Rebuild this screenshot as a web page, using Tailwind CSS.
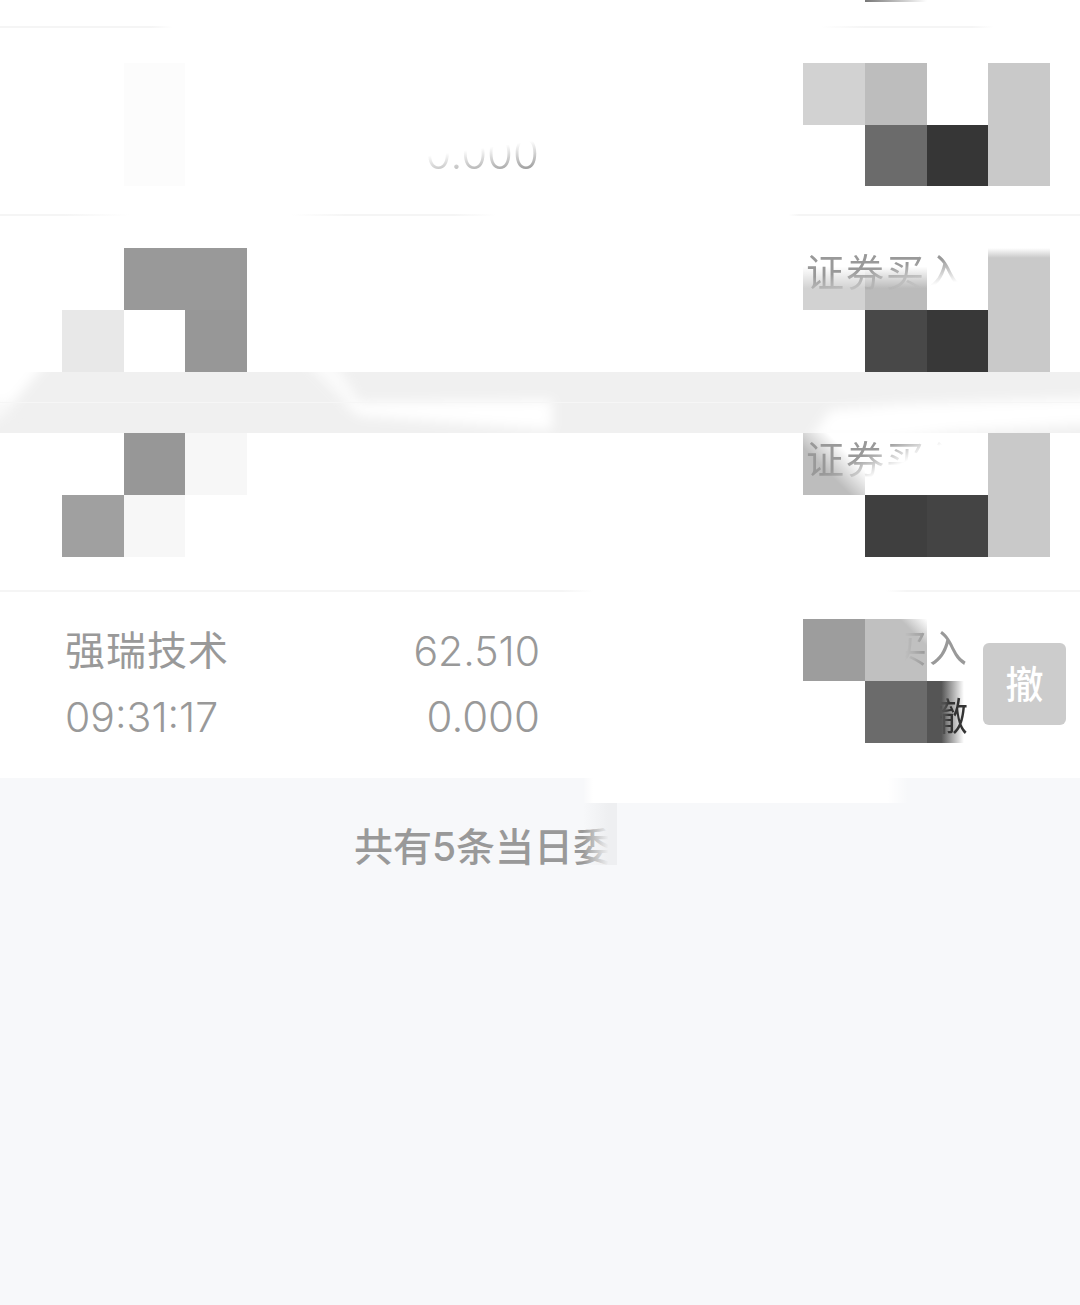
<!DOCTYPE html>
<html lang="zh">

<head>
    <meta charset="UTF-8">
    <meta name="viewport" content="width=device-width, initial-scale=1.0">
    <script src="https://cdn.jsdelivr.net/npm/@tailwindcss/browser@4"></script>
    <title>当日委托</title>
</head>

<body>
    <div class="relative h-[1305px] w-[1080px] overflow-hidden bg-[#f7f8fa] font-['Inter','Noto_Sans_CJK_SC',sans-serif]">

        <!-- List -->
        <div class="bg-white">
            <!-- Cut off row at top -->
            <div class="h-[26px] pl-[865px]">
                <div class="h-[2px] w-[62px] bg-[linear-gradient(to_right,#777,#fff)]"></div>
            </div>
            <div class="h-[2px] bg-[linear-gradient(to_right,#f5f5f5,#f5f5f5_14%,#fff_16%,#fff_76%,#f5f5f5_80%,#f5f5f5_90%,#fff_92%)]"></div>

            <!-- Row 1 -->
            <div class="relative flex h-[186px] justify-between pl-[62px] pr-[30px] pt-[35px]">
                <div class="grid h-[123px] w-[185px] grid-cols-3 grid-rows-2">
                    <div></div><div class="bg-[#fcfcfc]"></div><div></div>
                    <div></div><div class="bg-[#fcfcfc]"></div><div></div>
                </div>
                <div class="grid h-[123px] w-[247px] grid-cols-4 grid-rows-2">
                    <div class="bg-[#d2d2d2]"></div><div class="bg-[#bdbdbd]"></div><div></div><div class="bg-[#c9c9c9]"></div>
                    <div></div><div class="bg-[#6b6b6b]"></div><div class="bg-[#363636]"></div><div class="bg-[#c9c9c9]"></div>
                </div>
                <div class="absolute right-[541px] top-[96px] text-[42px] leading-[60px] font-[350] text-[#999] [mask-image:linear-gradient(172deg,transparent_42%,black_80%)]">0.000</div>
            </div>
            <div class="h-[2px] bg-[linear-gradient(to_right,#f5f5f5,#f5f5f5_6%,#fff_12%,#fff_27%,#f5f5f5_32%,#f5f5f5_42%,#fff_46%,#fff_73%,#f5f5f5_74%)]"></div>

            <!-- Row 2 -->
            <div class="relative flex h-[186px] justify-between pl-[62px] pr-[30px] pt-[32px]">
                <div class="grid h-[124px] w-[185px] grid-cols-3 grid-rows-2">
                    <div></div><div class="bg-[#999]"></div><div class="bg-[#999]"></div>
                    <div class="bg-[#e8e8e8]"></div><div></div><div class="bg-[#979797]"></div>
                </div>
                <div class="grid h-[124px] w-[247px] grid-cols-4 grid-rows-2">
                    <div class="bg-[#d2d2d2]"></div><div class="bg-[#bbb]"></div><div></div><div class="bg-[linear-gradient(to_bottom,#fff,#c9c9c9_16%)]"></div>
                    <div></div><div class="bg-[#484848]"></div><div class="bg-[#383838]"></div><div class="bg-[#c9c9c9]"></div>
                </div>
                <div class="absolute left-[803px] top-[32px] h-[62px] w-[170px] bg-[linear-gradient(to_bottom,#fff_30%,transparent_65%)] pl-[3px] pt-[1px]">
                    <div class="whitespace-nowrap text-[38px] leading-[46px] tracking-[2px] text-[#999] [mask-image:linear-gradient(172deg,black_42%,transparent_78%)]">证券买入</div>
                </div>
            </div>
            <div class="h-[2px] bg-[#f5f5f5]"></div>

            <!-- Row 3 -->
            <div class="relative flex h-[186px] justify-between pl-[62px] pr-[30px] pt-[29px]">
                <div class="grid h-[124px] w-[185px] grid-cols-3 grid-rows-2">
                    <div></div><div class="bg-[#979797]"></div><div class="bg-[#f7f7f7]"></div>
                    <div class="bg-[#a0a0a0]"></div><div class="bg-[#f7f7f7]"></div><div></div>
                </div>
                <div class="grid h-[124px] w-[247px] grid-cols-4 grid-rows-2">
                    <div class="bg-[#bdbdbd]"></div><div></div><div></div><div class="bg-[#c9c9c9]"></div>
                    <div></div><div class="bg-[#3f3f3f]"></div><div class="bg-[#444]"></div><div class="bg-[#c9c9c9]"></div>
                </div>
                <div class="absolute left-[803px] top-[29px] h-[62px] w-[62px] bg-[linear-gradient(to_bottom_left,#fff_30%,transparent_62%)]"></div>
                <div class="absolute left-[806px] top-[32px] whitespace-nowrap text-[38px] leading-[46px] tracking-[2px] text-[#999] [mask-image:linear-gradient(155deg,black_38%,transparent_60%)]">证券买入</div>
            </div>
            <div class="h-[2px] bg-[linear-gradient(to_right,#f5f5f5,#f5f5f5_52%,#fff_55%,#fff_82%,#f5f5f5_84%)]"></div>

            <!-- Row 4 -->
            <div class="relative flex h-[186px] justify-between pl-[65px] pr-[14px] pt-[26px]">
                <div class="w-[475px]">
                    <div class="flex justify-between text-[40px] leading-[66px] text-[#999]">
                        <span class="tracking-[1px]">强瑞技术</span>
                        <span class="text-[41px] font-[350]">62.510</span>
                    </div>
                    <div class="flex justify-between text-[41px] leading-[66px] font-[350] text-[#999]">
                        <span>09:31:17</span>
                        <span class="text-[42px]">0.000</span>
                    </div>
                </div>
                <div class="absolute left-[803px] top-[27px] grid h-[124px] w-[165px] grid-cols-[62px_62px_41px] grid-rows-2">
                    <div class="bg-[#9d9d9d]"></div>
                    <div class="bg-[linear-gradient(to_bottom_left,#fff,#c0c0c0_22%)]"></div>
                    <div></div>
                    <div></div>
                    <div class="bg-[#6b6b6b]"></div>
                    <div class="bg-[linear-gradient(to_right,#555_35%,#fff_90%)] text-right text-[38px] leading-[70px] text-[#333]">
                        <span class="[mask-image:linear-gradient(to_right,transparent_25%,black_50%)]">撤</span>
                    </div>
                </div>
                <div class="absolute left-[889px] top-[33px] whitespace-nowrap text-[38px] leading-[46px] tracking-[2px] text-[#999] [mask-image:linear-gradient(to_right,transparent_20%,black_45%)]">买入</div>
                <button class="mt-[25px] flex h-[82px] w-[83px] items-center justify-center rounded-[6px] bg-[#ccc] text-[38px] font-medium text-white">撤</button>
            </div>
        </div>

        <!-- Footer -->
        <div class="pl-[354px] pt-[41px] text-[39px] leading-[56px] font-medium text-[#999]">共有5条当日委</div>

        <!-- Grey band that lies over rows 2 and 3 -->
        <svg class="absolute left-0 top-[372px]" width="1080" height="61" viewBox="0 0 1080 61">
            <defs>
                <filter id="soft" x="-5%" y="-30%" width="110%" height="160%"><feGaussianBlur stdDeviation="6"></feGaussianBlur></filter>
                <clipPath id="band"><rect width="1080" height="61"></rect></clipPath>
            </defs>
            <rect width="1080" height="61" fill="#f0f0f0"></rect>
            <g clip-path="url(#band)">
                <g filter="url(#soft)">
                    <polygon points="-20,-20 55,-20 12,32 -20,32" fill="#fff"></polygon>
                    <polygon points="-20,35 15,35 -20,58" fill="#fafafa"></polygon>
                    <polygon points="305,-10 335,-10 360,30 345,30" fill="#fbfbfb"></polygon>
                    <polygon points="342,31 552,28 552,58 360,44" fill="#fff"></polygon>
                    <polygon points="810,68 830,38 900,32 1095,26 1095,52 950,60 890,68" fill="#fff"></polygon>
                </g>
            </g>
            <rect y="30" width="1080" height="1" fill="#f6f6f6"></rect>
        </svg>

        <!-- Patches below the list -->
        <div class="absolute left-[583px] top-[778px] h-[25px] w-[325px] bg-[linear-gradient(to_right,transparent,#fff_10px,#fff_305px,transparent)]"></div>
        <div class="absolute left-[583px] top-[803px] h-[62px] w-[34px] bg-[linear-gradient(to_right,transparent,#eeeff1_75%)]"></div>
    </div>
</body>

</html>
